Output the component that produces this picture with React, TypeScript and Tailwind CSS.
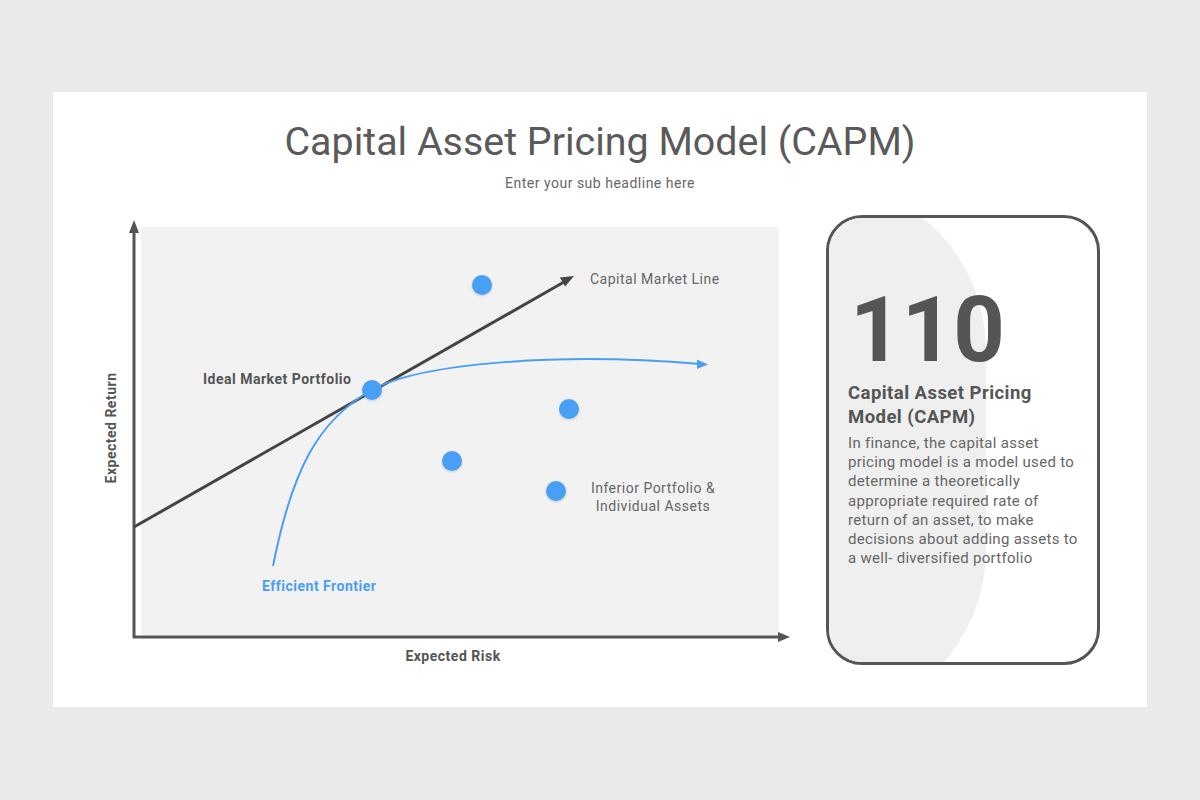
import React from "react";

const BLUE = "#4a9ff5";

function Chart() {
  const dots = [
    [482, 285],
    [372, 390],
    [569, 409],
    [452, 461],
    [556, 491],
  ];
  return (
    <div className="relative w-[700px] h-[460px] shrink-0">
      <svg
        className="absolute inset-0"
        width="700"
        height="460"
        viewBox="100 215 700 460"
        style={{ fontFamily: "Roboto, 'Liberation Sans', sans-serif" }}
      >
        <defs>
          <filter id="sh" x="-50%" y="-50%" width="200%" height="200%">
            <feDropShadow dx="0" dy="1" stdDeviation="1.2" floodColor="#000" floodOpacity="0.18" />
          </filter>
        </defs>
        <rect x="141" y="227" width="638" height="408" fill="#f2f2f2" />
        {/* axes */}
        <line x1="134" y1="638" x2="134" y2="230" stroke="#555" strokeWidth="3" />
        <polygon points="129,233 134,220 139,233" fill="#555" />
        <line x1="133" y1="637" x2="780" y2="637" stroke="#555" strokeWidth="3" />
        <polygon points="778,632 790,637 778,642" fill="#555" />
        {/* capital market line */}
        <line x1="134" y1="527" x2="564" y2="282" stroke="#444" strokeWidth="3" />
        <polygon points="574,276 565.1,286.6 559.9,277.4" fill="#444" />
        {/* efficient frontier */}
        <path
          d="M273,566 C292,470 318,420 372,390 C420,363 560,352 700,364"
          fill="none"
          stroke={BLUE}
          strokeWidth="2"
        />
        <polygon points="697,359.5 708,364.5 697,369" fill={BLUE} />
        {dots.map(([x, y], i) => (
          <circle key={i} cx={x} cy={y} r="10" fill={BLUE} filter="url(#sh)" />
        ))}
        {/* labels */}
        <text x="590" y="284" fontSize="14" letterSpacing="0.5" fill="#666">
          Capital Market Line
        </text>
        <text x="203" y="384" fontSize="14" letterSpacing="0.5" fontWeight="700" fill="#555">
          Ideal Market Portfolio
        </text>
        <text x="262" y="591" fontSize="14" letterSpacing="0.5" fontWeight="700" fill={BLUE}>
          Efficient Frontier
        </text>
        <text x="653" y="493" fontSize="14" letterSpacing="0.5" fill="#666" textAnchor="middle">
          Inferior Portfolio &amp;
        </text>
        <text x="653" y="511" fontSize="14" letterSpacing="0.5" fill="#666" textAnchor="middle">
          Individual Assets
        </text>
        <text
          x="453"
          y="661"
          fontSize="14"
          letterSpacing="0.5"
          fontWeight="700"
          fill="#555"
          textAnchor="middle"
        >
          Expected Risk
        </text>
        <text
          transform="translate(116,428) rotate(-90)"
          x="0"
          y="0"
          fontSize="14"
          letterSpacing="0.5"
          fontWeight="700"
          fill="#555"
          textAnchor="middle"
        >
          Expected Return
        </text>
      </svg>
    </div>
  );
}

function InfoCard() {
  const lines = [
    "In finance, the capital asset",
    "pricing model is a model used to",
    "determine a theoretically",
    "appropriate required rate of",
    "return of an asset, to make",
    "decisions about adding assets to",
    "a well- diversified portfolio",
  ];
  return (
    <div className="relative w-[274px] h-[450px] rounded-[36px] border-[3px] border-[#555] overflow-hidden bg-white shrink-0">
      <div className="absolute left-[-183px] top-[-38px] w-[340px] h-[540px] rounded-full bg-[#efefef]" />
      <div className="relative pl-[19px] pt-[68px] text-[#555]">
        <div className="pl-[2px] text-[90px] leading-[90px] font-bold">110</div>
        <div className="mt-[5px] text-[18.5px] leading-[24px] font-bold tracking-[0.45px] text-[#555]">
          Capital Asset Pricing
          <br />
          Model (CAPM)
        </div>
        <div className="mt-[5px] text-[15px] leading-[19.2px] tracking-[0.3px] text-[#666]">
          {lines.map((l) => (
            <div key={l} className="whitespace-nowrap">
              {l}
            </div>
          ))}
        </div>
      </div>
    </div>
  );
}

export default function App() {
  return (
    <div
      className="w-[1200px] h-[800px] bg-[#ebeaeb] pt-[92px] px-[53px]"
      style={{ fontFamily: "Roboto, 'Liberation Sans', sans-serif" }}
    >
      <div className="h-[615px] bg-white flex flex-col items-center">
        <h1 className="pt-[27px] text-[39.4px] leading-[46px] font-normal text-[#5a5a5a]">
          Capital Asset Pricing Model (CAPM)
        </h1>
        <div className="mt-[8px] text-[14px] leading-[20px] tracking-[0.5px] text-[#666]">
          Enter your sub headline here
        </div>
        <div className="mt-[22px] w-full flex pl-[47px] gap-[26px]">
          <Chart />
          <InfoCard />
        </div>
      </div>
    </div>
  );
}
